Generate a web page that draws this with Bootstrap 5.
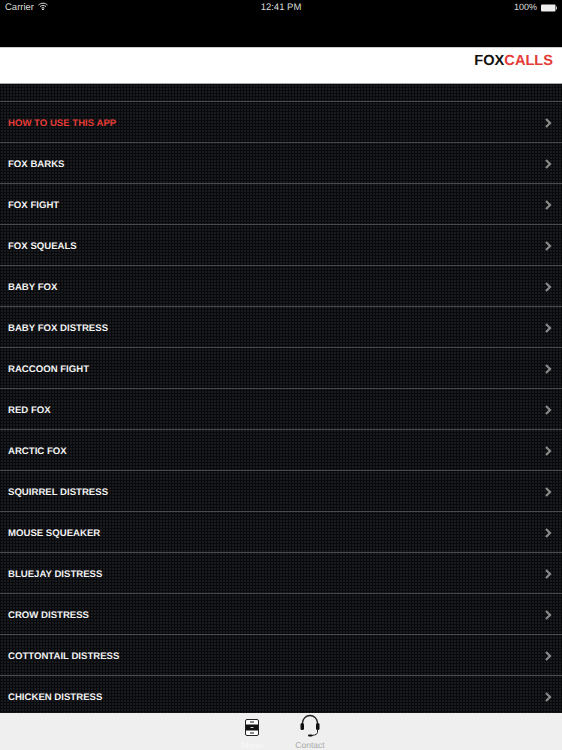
<!DOCTYPE html>
<html lang="en">
<head>
  <meta charset="UTF-8" />
  <meta name="viewport" content="width=device-width, initial-scale=1" />
  <title>Fox Calls</title>
  <link href="https://cdn.jsdelivr.net/npm/bootstrap@5.3.3/dist/css/bootstrap.min.css" rel="stylesheet" />
  <style>
    body {
      background: #000;
      font-family: "Liberation Sans", Arial, sans-serif;
      height: 750px;
      overflow: hidden;
      text-rendering: geometricPrecision;
    }

    .status-bar {
      height: 47px;
      padding: 2px 5px 0;
      font-size: 9.5px;
      line-height: 11px;
      color: #ddd;
    }

    .status-time {
      left: 0;
      right: 0;
      top: 2px;
      text-align: center;
    }

    .status-battery {
      font-size: 9px;
    }

    .battery-icon {
      margin-top: 2px;
    }

    .brand-bar {
      height: 37px;
      padding: 0 9px 8px 0;
      background: #fff;
      border-top: 1px solid #ccc;
      border-bottom: 1px solid #aaa;
      font-size: 14.6px;
      font-weight: 700;
      color: #111;
    }

    .brand-red {
      color: #e33b36;
    }

    .call-list {
      padding-top: 17px;
      background-color: #1a1b20;
      background-image:
        linear-gradient(90deg, #08090b 1px, transparent 1px),
        linear-gradient(#08090b 1px, transparent 1px);
      background-size: 3px 3px;
    }

    .call-row {
      flex: 0 0 41px;
      padding: 4px 10px 0 8px;
      border-top: 1px solid #4a4a4c;
      font-size: 9.6px;
      font-weight: 700;
      color: #f2f2f2;
    }

    .call-row.is-active {
      color: #e33b36;
    }

    .row-chevron {
      margin-top: -3px;
    }

    .tab-bar {
      height: 37px;
      background: #efefef;
      gap: 24px;
    }

    .tab-item {
      width: 34px;
      font-size: 8.5px;
      line-height: 10px;
      color: #a9a9a9;
    }

    .tab-item.is-active {
      color: #f8f8f8;
    }
  </style>
</head>
<body class="d-flex flex-column">

  <div class="status-bar position-relative d-flex justify-content-between flex-shrink-0">
    <div class="d-flex gap-1">
      <span>Carrier</span>
      <svg width="10" height="9" viewBox="0 0 10 9" fill="none" stroke="#ddd" stroke-width="1">
        <path d="M.5 3C3 .6 7 .6 9.5 3M2 4.6c1.7-1.5 4.3-1.5 6 0M3.5 6.1c.9-.7 2.1-.7 3 0" />
        <path d="M4.2 7.2 5 8l.8-.8C5.300 6.800 4.700 6.800 4.200 7.200z" fill="#ddd" />
      </svg>
    </div>
    <span class="status-time position-absolute">12:41 PM</span>
    <div class="status-battery d-flex gap-1">
      <span>100%</span>
      <svg width="16" height="8" viewBox="0 0 16 8" class="battery-icon">
        <rect x="0" y="0.5" width="14.5" height="7" rx="1" fill="#eee" />
        <rect x="15" y="2.5" width="1" height="3" fill="#bbb" />
      </svg>
    </div>
  </div>

  <div class="brand-bar d-flex align-items-center justify-content-end flex-shrink-0">
    <span>FOX</span><span class="brand-red">CALLS</span>
  </div>

  <div class="call-list flex-grow-1 overflow-hidden d-flex flex-column" id="callList"></div>

  <div class="tab-bar d-flex justify-content-center flex-shrink-0">
    <div class="tab-item is-active d-flex flex-column align-items-center">
      <svg width="16" height="27" viewBox="0 0 16 27">
        <rect x="1.5" y="6.5" width="13" height="16" rx="1.5" fill="#fff" stroke="#222" />
        <rect x="2" y="11.5" width="12" height="6" fill="#111" />
        <path d="M6 9h4M6 20h4" stroke="#666" stroke-width="1.5" />
        <path d="M6.5 14.500h3" stroke="#ccc" stroke-width="1" />
      </svg>
      <span>Menu</span>
    </div>
    <div class="tab-item d-flex flex-column align-items-center">
      <svg width="22" height="27" viewBox="0 0 22 27" fill="none">
        <path d="M3.5 11V10a7.5 7.5 0 0 1 15 0v1" stroke="#222" stroke-width="1.3" />
        <rect x="1.5" y="10" width="3.5" height="7" rx="1.5" fill="#111" />
        <rect x="17" y="10" width="3.5" height="7" rx="1.5" fill="#111" />
        <path d="M18.5 17v2.5c0 1.500-2 2.500-5.500 3" stroke="#222" stroke-width="1" />
        <rect x="9" y="21.5" width="4.5" height="2" rx="1" fill="#111" />
      </svg>
      <span>Contact</span>
    </div>
  </div>

  <script src="https://cdn.jsdelivr.net/npm/bootstrap@5.3.3/dist/js/bootstrap.bundle.min.js"></script>
  <script>
    const calls = ['HOW TO USE THIS APP', 'FOX BARKS', 'FOX FIGHT', 'FOX SQUEALS', 'BABY FOX', 'BABY FOX DISTRESS',
      'RACCOON FIGHT', 'RED FOX', 'ARCTIC FOX', 'SQUIRREL DISTRESS', 'MOUSE SQUEAKER', 'BLUEJAY DISTRESS',
      'CROW DISTRESS', 'COTTONTAIL DISTRESS', 'CHICKEN DISTRESS'];
    const chevron = '<svg class="row-chevron" width="7" height="10" viewBox="0 0 7 10" fill="none" stroke="#8a8a8a" stroke-width="2.2"><path d="M1 1l4 4-4 4" /></svg>';

    document.getElementById('callList').innerHTML = calls.map((name, i) =>
      `<div class="call-row ${i === 0 ? 'is-active' : ''} d-flex align-items-center justify-content-between"><span>${name}</span>${chevron}</div>`
    ).join('');
  </script>
</body>
</html>
